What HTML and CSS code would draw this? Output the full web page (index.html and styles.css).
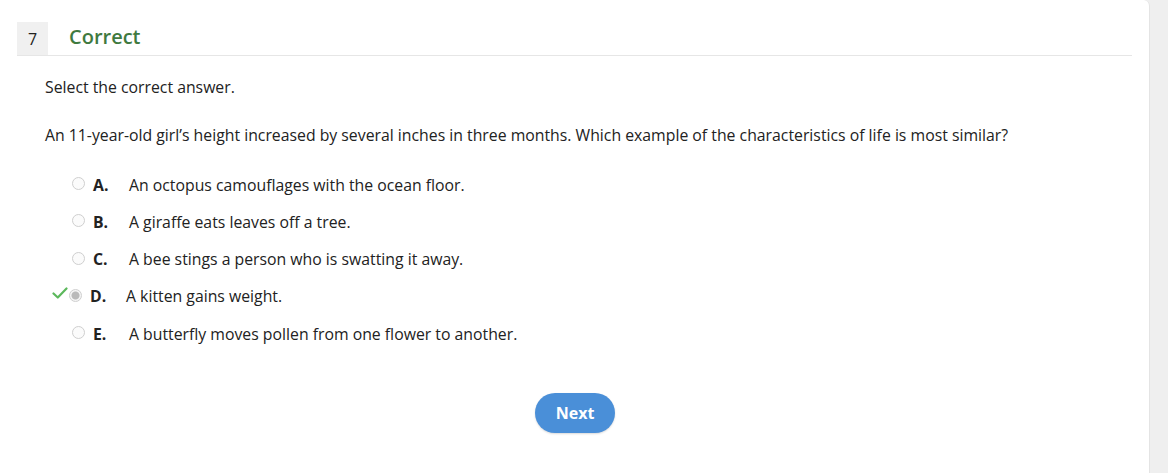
FILE: index.html
```html
<!DOCTYPE html>
<html>
<head>
<meta charset="utf-8">
<link rel="stylesheet" href="styles.css">
</head>
<body>
<div class="page">
  <div class="card">
    <div class="header">
      <div class="num">7</div>
      <div class="status">Correct</div>
    </div>
    <div class="body">
      <p class="instr">Select the correct answer.</p>
      <p class="question">An 11-year-old girl’s height increased by several inches in three months. Which example of the characteristics of life is most similar?</p>
      <ul class="options">
        <li class="opt"><span class="radio"></span><span class="letter">A.</span><span class="text">An octopus camouflages with the ocean floor.</span></li>
        <li class="opt"><span class="radio"></span><span class="letter">B.</span><span class="text">A giraffe eats leaves off a tree.</span></li>
        <li class="opt"><span class="radio"></span><span class="letter">C.</span><span class="text">A bee stings a person who is swatting it away.</span></li>
        <li class="opt correct"><svg class="check" width="16" height="12" viewBox="0 0 16 12"><path d="M1.5 6.5 L5.8 10.5 L14.5 1.5" fill="none" stroke="#5cb85c" stroke-width="2.2" stroke-linecap="round" stroke-linejoin="round"/></svg><span class="radio checked"></span><span class="letter">D.</span><span class="text">A kitten gains weight.</span></li>
        <li class="opt"><span class="radio"></span><span class="letter">E.</span><span class="text">A butterfly moves pollen from one flower to another.</span></li>
      </ul>
      <div class="actions"><button class="next">Next</button></div>
    </div>
  </div>
  <div class="side"></div>
</div>
</body>
</html>
```
FILE: styles.css
```css
html, body {
  margin: 0;
  padding: 0;
  background: #efefef;
  font-family: "Open Sans", "Liberation Sans", sans-serif;
  color: #222;
}
.page {
  display: flex;
  height: 473px;
}
.card {
  width: 1150px;
  background: #fff;
  border-top-right-radius: 6px;
  border-right: 1px solid #e4e4e4;
  box-sizing: border-box;
  padding: 22px 17px 0 17px;
}
.side {
  flex: 1;
}
.header {
  display: flex;
  align-items: center;
  height: 33px;
  border-bottom: 1px solid #e6e6e6;
}
.num {
  width: 31px;
  height: 33px;
  background: #f0f0f0;
  display: flex;
  align-items: center;
  justify-content: center;
  font-size: 16px;
  color: #222;
}
.status {
  margin-left: 21px;
  font-size: 20px;
  font-weight: 600;
  color: #3f7a3f;
  line-height: 33px;
  padding-bottom: 4px;
}
.body {
  padding-left: 28px;
}
.instr {
  margin: 19px 0 0 0;
  font-size: 15.8px;
  line-height: 24px;
}
.question {
  margin: 24px 0 0 0;
  font-size: 15.8px;
  line-height: 24px;
}
.options {
  list-style: none;
  margin: 19px 0 0 0;
  padding: 0 0 0 27px;
}
.opt {
  display: flex;
  align-items: center;
  height: 37.25px;
  font-size: 15.8px;
}
.radio {
  width: 11px;
  height: 11px;
  border: 1px solid #cfcfcf;
  border-radius: 50%;
  background: #fbfbfb;
  box-sizing: content-box;
  flex: none;
  margin-top: -2px;
}
.radio.checked {
  background: radial-gradient(circle, #b9b9b9 0 3.5px, #f4f4f4 4.5px);
}
.letter {
  font-weight: 700;
  margin-left: 8px;
  width: 36px;
  flex: none;
}
.text {
  white-space: nowrap;
}
.opt.correct {
  margin-left: -20px;
}
.check {
  margin-right: 1px;
  margin-top: -6px;
  flex: none;
}
.actions {
  display: flex;
  justify-content: center;
  margin-top: 41px;
  padding-right: 27px;
}
.next {
  width: 80px;
  height: 40px;
  border: none;
  border-radius: 20px;
  background: #4a8fd8;
  color: #fff;
  font-family: "Open Sans", "Liberation Sans", sans-serif;
  font-size: 16px;
  font-weight: 700;
  box-shadow: 0 1px 2px rgba(0,0,0,0.15);
}
```
